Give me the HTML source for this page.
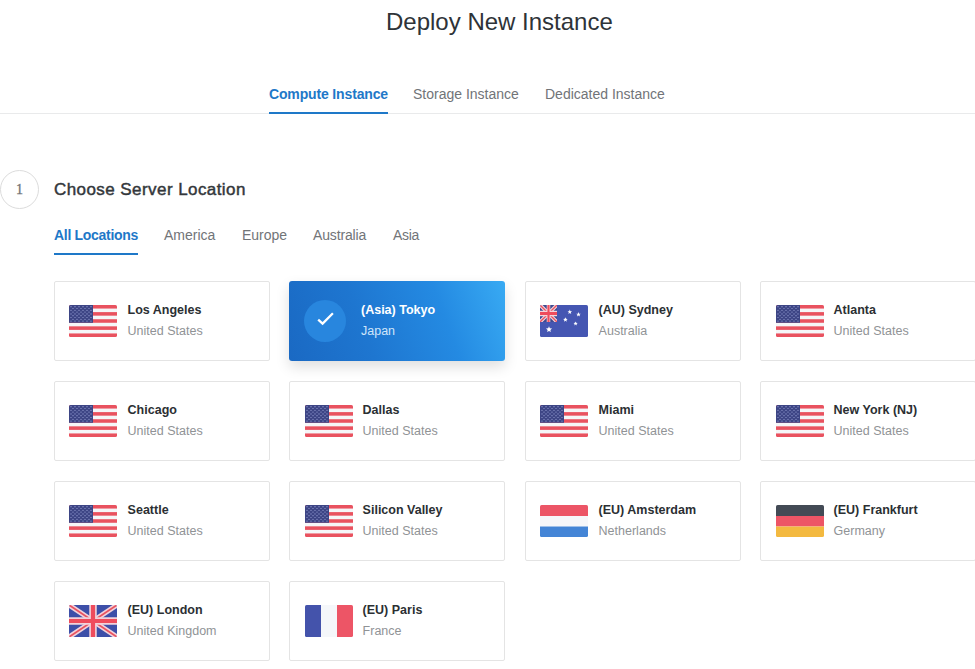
<!DOCTYPE html>
<html><head><meta charset="utf-8">
<style>
*{margin:0;padding:0;box-sizing:border-box}
html,body{width:975px;height:669px;overflow:hidden;background:#fff}
body{font-family:"Liberation Sans",sans-serif;position:relative}
.abs{position:absolute;white-space:nowrap}
#title{left:386px;top:8px;font-size:24px;color:#2e3338;line-height:28px}
.tab{top:86px;font-size:14px;line-height:16px;color:#717478}
.tab.act{letter-spacing:-0.15px}
.tab.act{color:#1e78c8;font-weight:bold}
#hline{left:0;top:113px;width:975px;height:1px;background:#e9eaeb}
#tabul{left:269px;top:112px;width:119px;height:2px;background:#1e78c8}
#step{left:0;top:170px;width:39px;height:39px;border:1px solid #dcdcdc;border-radius:50%;font-family:"Liberation Serif",serif;font-size:14px;color:#707376;text-align:center;line-height:38px;-webkit-text-stroke:0.3px #707376}
#h2{left:54px;top:180px;font-size:17px;color:#33373b;line-height:20px;-webkit-text-stroke:0.45px #33373b;letter-spacing:0.43px}
.lt{top:227px;font-size:14px;line-height:16px;color:#717478}
.lt.act{color:#1e78c8;font-weight:bold;letter-spacing:-0.3px}
#ltul{left:54px;top:253px;width:84px;height:2px;background:#1e78c8}
.card{position:absolute;width:216px;height:80px;border:1px solid #e4e4e4;border-radius:2px;background:#fff}
.card .flag{position:absolute;left:14px;top:23px;width:48px;height:32px}
.c1 .flag,.c3 .flag{left:15px}
.card .nm{position:absolute;left:72.6px;top:20px;font-size:12.5px;font-weight:bold;color:#2b2f33;white-space:nowrap;line-height:16px}
.card .ct{position:absolute;left:72.6px;top:40.5px;font-size:12.5px;color:#909396;white-space:nowrap;line-height:16px}
.card.sel{border:none;border-radius:3px;background:linear-gradient(70deg,#1a69c3 0%,#1e76d0 35%,#248ae2 70%,#38aaf3 100%);box-shadow:0 6px 14px rgba(0,0,0,0.13)}
.card.sel .nm{color:#fff;left:72px;top:21px}
.card.sel .ct{color:#cfe5fa;left:72px;top:42px}
.chk{position:absolute;left:15px;top:19px;width:42px;height:42px;border-radius:50%;background:#2886de}
</style></head><body>
<div class="abs" id="title">Deploy New Instance</div>
<div class="abs tab act" style="left:269px">Compute Instance</div>
<div class="abs tab" style="left:413px">Storage Instance</div>
<div class="abs tab" style="left:545px">Dedicated Instance</div>
<div class="abs" id="hline"></div>
<div class="abs" id="tabul"></div>
<div class="abs" id="step">1</div>
<div class="abs" id="h2">Choose Server Location</div>
<div class="abs lt act" style="left:54px">All Locations</div>
<div class="abs lt" style="left:164px">America</div>
<div class="abs lt" style="left:242px">Europe</div>
<div class="abs lt" style="left:313px;letter-spacing:-0.15px">Australia</div>
<div class="abs lt" style="left:393px;letter-spacing:-0.35px">Asia</div>
<div class="abs" id="ltul"></div>
<!--CARDS-->
<svg width="0" height="0" style="position:absolute"><defs><clipPath id="rc"><rect width="48" height="32" rx="1.6"/></clipPath><symbol id="fus" viewBox="0 0 48 32"><g clip-path="url(#rc)"><rect width="48" height="32" fill="#f5f6f8"/><rect y="0.000" width="48" height="3.556" fill="#e9525f"/><rect y="7.111" width="48" height="3.556" fill="#e9525f"/><rect y="14.222" width="48" height="3.556" fill="#e9525f"/><rect y="21.333" width="48" height="3.556" fill="#e9525f"/><rect y="28.444" width="48" height="3.556" fill="#e9525f"/><rect width="24" height="17.778" fill="#3d4585"/><circle cx="2.00" cy="1.70" r="0.62" fill="#9aa2d6"/><circle cx="6.00" cy="1.70" r="0.62" fill="#9aa2d6"/><circle cx="10.00" cy="1.70" r="0.62" fill="#9aa2d6"/><circle cx="14.00" cy="1.70" r="0.62" fill="#9aa2d6"/><circle cx="18.00" cy="1.70" r="0.62" fill="#9aa2d6"/><circle cx="22.00" cy="1.70" r="0.62" fill="#9aa2d6"/><circle cx="4.00" cy="3.50" r="0.62" fill="#9aa2d6"/><circle cx="8.00" cy="3.50" r="0.62" fill="#9aa2d6"/><circle cx="12.00" cy="3.50" r="0.62" fill="#9aa2d6"/><circle cx="16.00" cy="3.50" r="0.62" fill="#9aa2d6"/><circle cx="20.00" cy="3.50" r="0.62" fill="#9aa2d6"/><circle cx="2.00" cy="5.30" r="0.62" fill="#9aa2d6"/><circle cx="6.00" cy="5.30" r="0.62" fill="#9aa2d6"/><circle cx="10.00" cy="5.30" r="0.62" fill="#9aa2d6"/><circle cx="14.00" cy="5.30" r="0.62" fill="#9aa2d6"/><circle cx="18.00" cy="5.30" r="0.62" fill="#9aa2d6"/><circle cx="22.00" cy="5.30" r="0.62" fill="#9aa2d6"/><circle cx="4.00" cy="7.10" r="0.62" fill="#9aa2d6"/><circle cx="8.00" cy="7.10" r="0.62" fill="#9aa2d6"/><circle cx="12.00" cy="7.10" r="0.62" fill="#9aa2d6"/><circle cx="16.00" cy="7.10" r="0.62" fill="#9aa2d6"/><circle cx="20.00" cy="7.10" r="0.62" fill="#9aa2d6"/><circle cx="2.00" cy="8.90" r="0.62" fill="#9aa2d6"/><circle cx="6.00" cy="8.90" r="0.62" fill="#9aa2d6"/><circle cx="10.00" cy="8.90" r="0.62" fill="#9aa2d6"/><circle cx="14.00" cy="8.90" r="0.62" fill="#9aa2d6"/><circle cx="18.00" cy="8.90" r="0.62" fill="#9aa2d6"/><circle cx="22.00" cy="8.90" r="0.62" fill="#9aa2d6"/><circle cx="4.00" cy="10.70" r="0.62" fill="#9aa2d6"/><circle cx="8.00" cy="10.70" r="0.62" fill="#9aa2d6"/><circle cx="12.00" cy="10.70" r="0.62" fill="#9aa2d6"/><circle cx="16.00" cy="10.70" r="0.62" fill="#9aa2d6"/><circle cx="20.00" cy="10.70" r="0.62" fill="#9aa2d6"/><circle cx="2.00" cy="12.50" r="0.62" fill="#9aa2d6"/><circle cx="6.00" cy="12.50" r="0.62" fill="#9aa2d6"/><circle cx="10.00" cy="12.50" r="0.62" fill="#9aa2d6"/><circle cx="14.00" cy="12.50" r="0.62" fill="#9aa2d6"/><circle cx="18.00" cy="12.50" r="0.62" fill="#9aa2d6"/><circle cx="22.00" cy="12.50" r="0.62" fill="#9aa2d6"/><circle cx="4.00" cy="14.30" r="0.62" fill="#9aa2d6"/><circle cx="8.00" cy="14.30" r="0.62" fill="#9aa2d6"/><circle cx="12.00" cy="14.30" r="0.62" fill="#9aa2d6"/><circle cx="16.00" cy="14.30" r="0.62" fill="#9aa2d6"/><circle cx="20.00" cy="14.30" r="0.62" fill="#9aa2d6"/><circle cx="2.00" cy="16.10" r="0.62" fill="#9aa2d6"/><circle cx="6.00" cy="16.10" r="0.62" fill="#9aa2d6"/><circle cx="10.00" cy="16.10" r="0.62" fill="#9aa2d6"/><circle cx="14.00" cy="16.10" r="0.62" fill="#9aa2d6"/><circle cx="18.00" cy="16.10" r="0.62" fill="#9aa2d6"/><circle cx="22.00" cy="16.10" r="0.62" fill="#9aa2d6"/></g></symbol><symbol id="fuk" viewBox="0 0 48 32"><g clip-path="url(#rc)"><rect width="48" height="32" fill="#3d4fa8"/><path d="M0 0L48 32M48 0L0 32" stroke="#f2d2da" stroke-width="5"/><path d="M0 0L48 32M48 0L0 32" stroke="#e9525f" stroke-width="1.8"/><path d="M24 0V32M0 16H48" stroke="#f2d2da" stroke-width="7.5"/><path d="M24 0V32M0 16H48" stroke="#ef4c5c" stroke-width="4.2"/></g></symbol><symbol id="fau" viewBox="0 0 48 32"><g clip-path="url(#rc)"><rect width="48" height="32" fill="#4556b2"/><svg x="0" y="0" width="17" height="17" viewBox="0 0 48 32" preserveAspectRatio="none"><rect width="48" height="32" fill="#3f4a90"/><path d="M0 0L48 32M48 0L0 32" stroke="#f3d6dc" stroke-width="8"/><path d="M0 0L48 32M48 0L0 32" stroke="#e9525f" stroke-width="3"/><path d="M24 0V32M0 16H48" stroke="#f3d6dc" stroke-width="10"/><path d="M24 0V32M0 16H48" stroke="#ef4c5c" stroke-width="6"/></svg><polygon points="9.00,21.30 9.85,23.34 12.04,23.51 10.37,24.94 10.88,27.09 9.00,25.94 7.12,27.09 7.63,24.94 5.96,23.51 8.15,23.34" fill="#fff"/><polygon points="29.80,4.60 30.43,6.13 32.08,6.26 30.83,7.33 31.21,8.94 29.80,8.08 28.39,8.94 28.77,7.33 27.52,6.26 29.17,6.13" fill="#fff"/><polygon points="38.50,7.10 39.13,8.63 40.78,8.76 39.53,9.83 39.91,11.44 38.50,10.58 37.09,11.44 37.47,9.83 36.22,8.76 37.87,8.63" fill="#fff"/><polygon points="25.40,12.30 26.03,13.83 27.68,13.96 26.43,15.03 26.81,16.64 25.40,15.78 23.99,16.64 24.37,15.03 23.12,13.96 24.77,13.83" fill="#fff"/><polygon points="35.60,16.40 36.18,17.80 37.69,17.92 36.54,18.91 36.89,20.38 35.60,19.59 34.31,20.38 34.66,18.91 33.51,17.92 35.02,17.80" fill="#fff"/></g></symbol><symbol id="fnl" viewBox="0 0 48 32"><g clip-path="url(#rc)"><rect width="48" height="11" fill="#ec5566"/><rect y="11" width="48" height="10.5" fill="#f6f7fa"/><rect y="21.5" width="48" height="10.5" fill="#4485d6"/></g></symbol><symbol id="fde" viewBox="0 0 48 32"><g clip-path="url(#rc)"><rect width="48" height="11" fill="#434a55"/><rect y="11" width="48" height="10.5" fill="#ed5566"/><rect y="21.5" width="48" height="10.5" fill="#f3b940"/></g></symbol><symbol id="ffr" viewBox="0 0 48 32"><g clip-path="url(#rc)"><rect width="16" height="32" fill="#4453ab"/><rect x="16" width="16" height="32" fill="#f5f7fa"/><rect x="32" width="16" height="32" fill="#ed5566"/></g></symbol></defs></svg>
<div class="card c0" style="left:54px;top:281px"><svg class="flag" viewBox="0 0 48 32"><use href="#fus"/></svg><div class="nm">Los Angeles</div><div class="ct">United States</div></div>
<div class="card sel c1" style="left:289px;top:281px"><div class="chk"><svg width="42" height="42" viewBox="0 0 42 42"><path d="M14.2 19.6L18.6 23.6L28.9 13.3" fill="none" stroke="#fff" stroke-width="2.3" stroke-linecap="butt" stroke-linejoin="miter"/></svg></div><div class="nm">(Asia) Tokyo</div><div class="ct">Japan</div></div>
<div class="card c2" style="left:525px;top:281px"><svg class="flag" viewBox="0 0 48 32"><use href="#fau"/></svg><div class="nm">(AU) Sydney</div><div class="ct">Australia</div></div>
<div class="card c3" style="left:760px;top:281px"><svg class="flag" viewBox="0 0 48 32"><use href="#fus"/></svg><div class="nm">Atlanta</div><div class="ct">United States</div></div>
<div class="card c0" style="left:54px;top:381px"><svg class="flag" viewBox="0 0 48 32"><use href="#fus"/></svg><div class="nm">Chicago</div><div class="ct">United States</div></div>
<div class="card c1" style="left:289px;top:381px"><svg class="flag" viewBox="0 0 48 32"><use href="#fus"/></svg><div class="nm">Dallas</div><div class="ct">United States</div></div>
<div class="card c2" style="left:525px;top:381px"><svg class="flag" viewBox="0 0 48 32"><use href="#fus"/></svg><div class="nm">Miami</div><div class="ct">United States</div></div>
<div class="card c3" style="left:760px;top:381px"><svg class="flag" viewBox="0 0 48 32"><use href="#fus"/></svg><div class="nm">New York (NJ)</div><div class="ct">United States</div></div>
<div class="card c0" style="left:54px;top:481px"><svg class="flag" viewBox="0 0 48 32"><use href="#fus"/></svg><div class="nm">Seattle</div><div class="ct">United States</div></div>
<div class="card c1" style="left:289px;top:481px"><svg class="flag" viewBox="0 0 48 32"><use href="#fus"/></svg><div class="nm">Silicon Valley</div><div class="ct">United States</div></div>
<div class="card c2" style="left:525px;top:481px"><svg class="flag" viewBox="0 0 48 32"><use href="#fnl"/></svg><div class="nm">(EU) Amsterdam</div><div class="ct">Netherlands</div></div>
<div class="card c3" style="left:760px;top:481px"><svg class="flag" viewBox="0 0 48 32"><use href="#fde"/></svg><div class="nm">(EU) Frankfurt</div><div class="ct">Germany</div></div>
<div class="card c0" style="left:54px;top:581px"><svg class="flag" viewBox="0 0 48 32"><use href="#fuk"/></svg><div class="nm">(EU) London</div><div class="ct">United Kingdom</div></div>
<div class="card c1" style="left:289px;top:581px"><svg class="flag" viewBox="0 0 48 32"><use href="#ffr"/></svg><div class="nm">(EU) Paris</div><div class="ct">France</div></div>
<!--/CARDS-->
</body></html>
